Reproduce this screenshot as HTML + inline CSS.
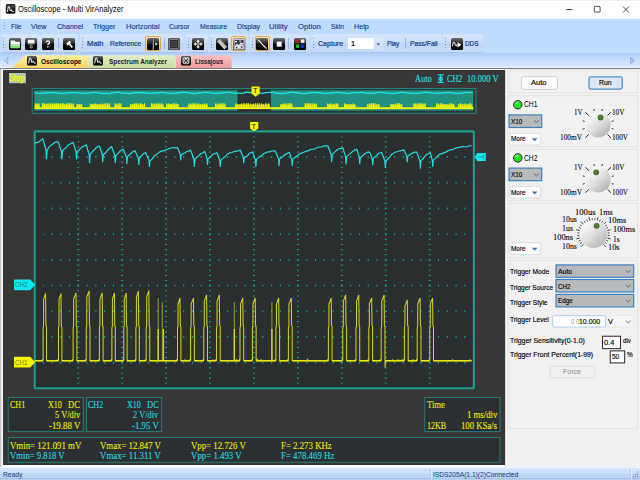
<!DOCTYPE html><html><head><meta charset="utf-8"><title>Oscilloscope - Multi VirAnalyzer</title><style>*{box-sizing:border-box;margin:0;padding:0}
html,body{width:640px;height:480px;overflow:hidden;background:#fff;font-family:"Liberation Sans",sans-serif;}
.a{position:absolute}
.t{position:absolute;white-space:nowrap;line-height:1.16}
#title{left:0;top:0;width:640px;height:19px;background:#fff;border-top:0.8px solid #efefef;border-left:0.8px solid #efefef}
#menubar{left:0;top:18.8px;width:640px;height:15.2px;background:#bfdbff}
#toolbar{left:0;top:34px;width:640px;height:19px;background:#bfdbff}
#tabs{left:0;top:53px;width:640px;height:14.8px;background:linear-gradient(#b0cdfa,#c3dbfc 40%,#dce9fb 92%,#f2f6fc)}
.band{position:absolute;top:34.3px;height:18.4px;border-radius:0 2.5px 2.5px 0;background:linear-gradient(#d6e5fb 0%,#cddff8 45%,#c1d6f4 55%,#c6dbf8 100%);border-bottom:1px solid #a9c4ea}
.grip{position:absolute;top:38px;width:1.2px;height:11px;background:repeating-linear-gradient(#6f98dc 0 1.3px,transparent 1.3px 2.9px)}
.ico{position:absolute;top:37.5px;width:12.2px;height:12.2px;border-radius:1.8px;background:linear-gradient(#6a6a6a,#222 45%,#000);overflow:hidden}
.hl{position:absolute;top:35.6px;width:15.4px;height:15.4px;border-radius:2px;border:1px solid #e0a850;background:linear-gradient(#fde6b0,#fbc670)}
.sep{position:absolute;top:38px;width:1px;height:11px;background:#9ab5de}
#scope{left:2.8px;top:70.3px;width:502.5px;height:394.4px;background:#373737}
#panel{left:507px;top:69px;width:133px;height:398px;background:#f0f0f0}
#status{left:0;top:467.2px;width:640px;height:12.8px;background:linear-gradient(#f4f8fd 0,#d9e7fa 8%,#cbdef7 45%,#bcd3f2 55%,#c0d6f3 85%,#9fbde6 88%,#c5d9f5 100%)}
svg{position:absolute;left:0;top:0;overflow:visible}
</style></head><body><div class="a" id="title"></div>
<svg width="20" height="19" viewBox="0 0 20 19"><rect x="5.8" y="4" width="9.6" height="9.8" rx="1.5" fill="#111"/><rect x="6.3" y="4.4" width="8.6" height="4" rx="1" fill="#555" opacity=".6"/><path d="M7.3 12 L8.3 6.8 L9.3 6.8 L10.3 11 L11.2 9.6 L11.9 11.3 L13.8 11.3" fill="none" stroke="#fff" stroke-width="0.9"/></svg>
<div class="t" style="left:18.40px;top:5.44px;font-size:8.2px;color:#000;font-family:'Liberation Sans',sans-serif;transform:scaleX(0.917);transform-origin:0 0;">Oscilloscope - Multi VirAnalyzer</div>
<svg width="640" height="19" viewBox="0 0 640 19"><path d="M566 9.5h6.5" stroke="#222" stroke-width="0.8"/><rect x="594.3" y="6.3" width="5.8" height="5.8" rx="0.8" fill="none" stroke="#222" stroke-width="0.8"/><path d="M623 6.5l6 6M629 6.5l-6 6" stroke="#222" stroke-width="0.8"/></svg>
<div class="a" id="menubar"></div><div class="a" id="toolbar"></div><div class="a" id="tabs"></div>
<div class="grip" style="left:3.5px;top:22px;height:8px"></div>
<div class="t" style="left:11.10px;top:23.35px;font-size:7.5px;color:#123a82;font-family:'Liberation Sans',sans-serif;transform:scaleX(0.868);transform-origin:0 0;-webkit-text-stroke:0.12px #123a82;">File</div>
<div class="t" style="left:31.40px;top:23.35px;font-size:7.5px;color:#123a82;font-family:'Liberation Sans',sans-serif;transform:scaleX(0.961);transform-origin:0 0;-webkit-text-stroke:0.12px #123a82;">View</div>
<div class="t" style="left:56.70px;top:23.35px;font-size:7.5px;color:#123a82;font-family:'Liberation Sans',sans-serif;transform:scaleX(0.937);transform-origin:0 0;-webkit-text-stroke:0.12px #123a82;">Channel</div>
<div class="t" style="left:92.70px;top:23.35px;font-size:7.5px;color:#123a82;font-family:'Liberation Sans',sans-serif;transform:scaleX(0.958);transform-origin:0 0;-webkit-text-stroke:0.12px #123a82;">Trigger</div>
<div class="t" style="left:125.80px;top:23.35px;font-size:7.5px;color:#123a82;font-family:'Liberation Sans',sans-serif;transform:scaleX(0.998);transform-origin:0 0;-webkit-text-stroke:0.12px #123a82;">Horizontal</div>
<div class="t" style="left:169.10px;top:23.35px;font-size:7.5px;color:#123a82;font-family:'Liberation Sans',sans-serif;transform:scaleX(0.915);transform-origin:0 0;-webkit-text-stroke:0.12px #123a82;">Cursor</div>
<div class="t" style="left:200.10px;top:23.35px;font-size:7.5px;color:#123a82;font-family:'Liberation Sans',sans-serif;transform:scaleX(0.925);transform-origin:0 0;-webkit-text-stroke:0.12px #123a82;">Measure</div>
<div class="t" style="left:236.70px;top:23.35px;font-size:7.5px;color:#123a82;font-family:'Liberation Sans',sans-serif;transform:scaleX(0.939);transform-origin:0 0;-webkit-text-stroke:0.12px #123a82;">Display</div>
<div class="t" style="left:269.20px;top:23.35px;font-size:7.5px;color:#123a82;font-family:'Liberation Sans',sans-serif;transform:scaleX(1.019);transform-origin:0 0;-webkit-text-stroke:0.12px #123a82;">Utility</div>
<div class="t" style="left:297.70px;top:23.35px;font-size:7.5px;color:#123a82;font-family:'Liberation Sans',sans-serif;transform:scaleX(1.027);transform-origin:0 0;-webkit-text-stroke:0.12px #123a82;">Option</div>
<div class="t" style="left:330.50px;top:23.35px;font-size:7.5px;color:#123a82;font-family:'Liberation Sans',sans-serif;transform:scaleX(0.891);transform-origin:0 0;-webkit-text-stroke:0.12px #123a82;">Skin</div>
<div class="t" style="left:353.50px;top:23.35px;font-size:7.5px;color:#123a82;font-family:'Liberation Sans',sans-serif;transform:scaleX(0.959);transform-origin:0 0;-webkit-text-stroke:0.12px #123a82;">Help</div>
<div class="band" style="left:1.5px;width:76.3px"></div>
<div class="grip" style="left:3.3px"></div>
<div class="band" style="left:79.7px;width:104.3px"></div>
<div class="grip" style="left:81.5px"></div>
<div class="band" style="left:186px;width:21.5px"></div>
<div class="grip" style="left:187.8px"></div>
<div class="band" style="left:209.5px;width:38.5px"></div>
<div class="grip" style="left:211.3px"></div>
<div class="band" style="left:250px;width:59px"></div>
<div class="grip" style="left:251.8px"></div>
<div class="band" style="left:311px;width:130.5px"></div>
<div class="grip" style="left:312.8px"></div>
<div class="band" style="left:443px;width:40.39999999999998px"></div>
<div class="grip" style="left:444.8px"></div>
<div class="sep" style="left:57.7px"></div>
<div class="sep" style="left:164px"></div>
<div class="sep" style="left:288.4px"></div>
<div class="sep" style="left:404.6px"></div>
<div class="hl" style="left:145.2px"></div>
<div class="hl" style="left:230.6px"></div>
<div class="hl" style="left:254.6px"></div>
<svg style="left:8.9px;top:37.5px" width="12.2" height="12.2" viewBox="0 0 12.2 12.2"><defs><linearGradient id="ib0" x1="0" y1="0" x2="0" y2="1"><stop offset="0" stop-color="#6e6e6e"/><stop offset=".45" stop-color="#262626"/><stop offset=".5" stop-color="#0a0a0a"/><stop offset="1" stop-color="#000"/></linearGradient><clipPath id="ic0"><rect width="12.2" height="12.2" rx="1.8"/></clipPath></defs><g clip-path="url(#ic0)"><rect width="12.2" height="12.2" fill="url(#ib0)"/><path d="M1.6 2.4h4l.9 1.3h4.3v3H1.6z" fill="#fff"/><path d="M1.4 6.6h9.6v3.6H1.4z" fill="#7fe66e"/><path d="M1.4 6.6h9.6v1H1.4z" fill="#c9f7c0"/></g></svg>
<svg style="left:25.4px;top:37.5px" width="12.2" height="12.2" viewBox="0 0 12.2 12.2"><defs><linearGradient id="ib1" x1="0" y1="0" x2="0" y2="1"><stop offset="0" stop-color="#6e6e6e"/><stop offset=".45" stop-color="#262626"/><stop offset=".5" stop-color="#0a0a0a"/><stop offset="1" stop-color="#000"/></linearGradient><clipPath id="ic1"><rect width="12.2" height="12.2" rx="1.8"/></clipPath></defs><g clip-path="url(#ic1)"><rect width="12.2" height="12.2" fill="url(#ib1)"/><path d="M2.8 1.8h6.8v3.8H2.8z" fill="#f4f4f4"/><path d="M2.8 6.4h6.8" stroke="#aaa" stroke-width=".6"/><circle cx="6.2" cy="8.8" r="1.2" fill="none" stroke="#ddd" stroke-width=".8"/></g></svg>
<svg style="left:41.7px;top:37.5px" width="12.2" height="12.2" viewBox="0 0 12.2 12.2"><defs><linearGradient id="ib2" x1="0" y1="0" x2="0" y2="1"><stop offset="0" stop-color="#6e6e6e"/><stop offset=".45" stop-color="#262626"/><stop offset=".5" stop-color="#0a0a0a"/><stop offset="1" stop-color="#000"/></linearGradient><clipPath id="ic2"><rect width="12.2" height="12.2" rx="1.8"/></clipPath></defs><g clip-path="url(#ic2)"><rect width="12.2" height="12.2" fill="url(#ib2)"/><path d="M4.3 4.6q0-1.7 1.6-1.7t1.6 1.5q0 .9-.9 1.4t-.8 1.4" fill="none" stroke="#fff" stroke-width="1.3"/><rect x="5.1" y="8.2" width="1.4" height="1.3" fill="#fff"/></g></svg>
<svg style="left:62.9px;top:37.5px" width="12.2" height="12.2" viewBox="0 0 12.2 12.2"><defs><linearGradient id="ib3" x1="0" y1="0" x2="0" y2="1"><stop offset="0" stop-color="#6e6e6e"/><stop offset=".45" stop-color="#262626"/><stop offset=".5" stop-color="#0a0a0a"/><stop offset="1" stop-color="#000"/></linearGradient><clipPath id="ic3"><rect width="12.2" height="12.2" rx="1.8"/></clipPath></defs><g clip-path="url(#ic3)"><rect width="12.2" height="12.2" fill="url(#ib3)"/><path d="M3.2 5.6l3.4-2.8 1.6 1.8-1.2 1 3 3.2-1.2 1.1-3-3.3-1.2 1z" fill="#fff"/></g></svg>
<svg style="left:146.8px;top:37.5px" width="12.2" height="12.2" viewBox="0 0 12.2 12.2"><defs><linearGradient id="ib4" x1="0" y1="0" x2="0" y2="1"><stop offset="0" stop-color="#6e6e6e"/><stop offset=".45" stop-color="#262626"/><stop offset=".5" stop-color="#0a0a0a"/><stop offset="1" stop-color="#000"/></linearGradient><clipPath id="ic4"><rect width="12.2" height="12.2" rx="1.8"/></clipPath></defs><g clip-path="url(#ic4)"><rect width="12.2" height="12.2" fill="url(#ib4)"/><rect x="5.4" y=".4" width="1.6" height="11.4" fill="#9a9a9a"/><rect x="4.9" y=".4" width=".5" height="11.4" fill="#000"/><rect x="7" y=".4" width=".5" height="11.4" fill="#000"/><path d="M8.4 4.4l2.3 1.7-2.3 1.7z" fill="#fff"/></g></svg>
<svg style="left:168.2px;top:37.5px" width="12.2" height="12.2" viewBox="0 0 12.2 12.2"><defs><linearGradient id="ib5" x1="0" y1="0" x2="0" y2="1"><stop offset="0" stop-color="#6e6e6e"/><stop offset=".45" stop-color="#262626"/><stop offset=".5" stop-color="#0a0a0a"/><stop offset="1" stop-color="#000"/></linearGradient><clipPath id="ic5"><rect width="12.2" height="12.2" rx="1.8"/></clipPath></defs><g clip-path="url(#ic5)"><rect width="12.2" height="12.2" fill="url(#ib5)"/><rect x="0" y="0" width="12.2" height="12.2" rx="2" fill="#555"/><rect x="1.4" y="1.4" width="9.4" height="9.4" rx="1.4" fill="#2a2a2a" stroke="#999" stroke-width=".9"/><rect x="3.4" y="3.4" width="5.4" height="5.4" fill="#3c3c3c" stroke="#555" stroke-width=".5"/></g></svg>
<svg style="left:192.1px;top:37.5px" width="12.2" height="12.2" viewBox="0 0 12.2 12.2"><defs><linearGradient id="ib6" x1="0" y1="0" x2="0" y2="1"><stop offset="0" stop-color="#6e6e6e"/><stop offset=".45" stop-color="#262626"/><stop offset=".5" stop-color="#0a0a0a"/><stop offset="1" stop-color="#000"/></linearGradient><clipPath id="ic6"><rect width="12.2" height="12.2" rx="1.8"/></clipPath></defs><g clip-path="url(#ic6)"><rect width="12.2" height="12.2" fill="url(#ib6)"/><path d="M6.1 1.4l1.9 2.3H6.8v1.7h-1.4V3.7H4.2zM6.1 10.8l1.9-2.3H6.8V6.8h-1.4v1.7H4.2zM1.4 6.1l2.3-1.9v1.2h1.7v1.4H3.7v1.2zM10.8 6.1L8.5 4.2v1.2H6.8v1.4h1.7v1.2z" fill="#f0f0f0"/></g></svg>
<svg style="left:216px;top:37.5px" width="12.2" height="12.2" viewBox="0 0 12.2 12.2"><defs><linearGradient id="ib7" x1="0" y1="0" x2="0" y2="1"><stop offset="0" stop-color="#6e6e6e"/><stop offset=".45" stop-color="#262626"/><stop offset=".5" stop-color="#0a0a0a"/><stop offset="1" stop-color="#000"/></linearGradient><clipPath id="ic7"><rect width="12.2" height="12.2" rx="1.8"/></clipPath></defs><g clip-path="url(#ic7)"><rect width="12.2" height="12.2" fill="url(#ib7)"/><path d="M1.2 3.6L4 1l7.2 7.8-2.8 2.6z" fill="#cfcfcf"/><path d="M3.4 3.4l1.2-1.1M4.8 4.9l1.2-1.1M6.2 6.4l1.2-1.1M7.6 7.9l1.2-1.1M9 9.4l1.2-1.1" stroke="#333" stroke-width=".6"/></g></svg>
<svg style="left:232.6px;top:37.5px" width="12.2" height="12.2" viewBox="0 0 12.2 12.2"><defs><linearGradient id="ib8" x1="0" y1="0" x2="0" y2="1"><stop offset="0" stop-color="#6e6e6e"/><stop offset=".45" stop-color="#262626"/><stop offset=".5" stop-color="#0a0a0a"/><stop offset="1" stop-color="#000"/></linearGradient><clipPath id="ic8"><rect width="12.2" height="12.2" rx="1.8"/></clipPath></defs><g clip-path="url(#ic8)"><rect width="12.2" height="12.2" fill="url(#ib8)"/><rect x=".6" y=".6" width="11" height="11" fill="#e8e8e8"/><rect x="1.6" y="1.8" width="9" height="8.6" fill="#30404a"/><path d="M1.6 8l2.4-2.6 1.8 1.6 2-3 3 4.2v2.2H1.6z" fill="#cfd6da"/><path d="M2 3h2v1.2H2zM6.4 2.4h1.6v1H6.4zM8.8 5h1.4v1H8.8zM4.6 8.4h2v1.4h-2z" fill="#fff"/><path d="M3 9h1.2v1H3zM8 8.6h1.4v1.2H8z" fill="#10181c"/></g></svg>
<svg style="left:256.4px;top:37.5px" width="12.2" height="12.2" viewBox="0 0 12.2 12.2"><defs><linearGradient id="ib9" x1="0" y1="0" x2="0" y2="1"><stop offset="0" stop-color="#6e6e6e"/><stop offset=".45" stop-color="#262626"/><stop offset=".5" stop-color="#0a0a0a"/><stop offset="1" stop-color="#000"/></linearGradient><clipPath id="ic9"><rect width="12.2" height="12.2" rx="1.8"/></clipPath></defs><g clip-path="url(#ic9)"><rect width="12.2" height="12.2" fill="url(#ib9)"/><path d="M2 1.6l8.4 9" stroke="#fff" stroke-width="1.1"/></g></svg>
<svg style="left:272.5px;top:37.5px" width="12.2" height="12.2" viewBox="0 0 12.2 12.2"><defs><linearGradient id="ib10" x1="0" y1="0" x2="0" y2="1"><stop offset="0" stop-color="#6e6e6e"/><stop offset=".45" stop-color="#262626"/><stop offset=".5" stop-color="#0a0a0a"/><stop offset="1" stop-color="#000"/></linearGradient><clipPath id="ic10"><rect width="12.2" height="12.2" rx="1.8"/></clipPath></defs><g clip-path="url(#ic10)"><rect width="12.2" height="12.2" fill="url(#ib10)"/><rect x="3.7" y="3.6" width="5" height="5" fill="#fff"/></g></svg>
<svg style="left:293.8px;top:37.5px" width="12.2" height="12.2" viewBox="0 0 12.2 12.2"><defs><linearGradient id="ib11" x1="0" y1="0" x2="0" y2="1"><stop offset="0" stop-color="#6e6e6e"/><stop offset=".45" stop-color="#262626"/><stop offset=".5" stop-color="#0a0a0a"/><stop offset="1" stop-color="#000"/></linearGradient><clipPath id="ic11"><rect width="12.2" height="12.2" rx="1.8"/></clipPath></defs><g clip-path="url(#ic11)"><rect width="12.2" height="12.2" fill="url(#ib11)"/><rect x="1.8" y="1.5" width="3.4" height="3.3" fill="#c01818"/><rect x="6.9" y="1.5" width="3.5" height="3.3" fill="#f8f8f8"/><rect x="1.8" y="6.4" width="3.4" height="3.5" fill="#18c018"/><rect x="6.9" y="6.4" width="3.5" height="3.5" fill="#1030e8"/></g></svg>
<svg style="left:450.6px;top:37.5px" width="12.2" height="12.2" viewBox="0 0 12.2 12.2"><defs><linearGradient id="ib12" x1="0" y1="0" x2="0" y2="1"><stop offset="0" stop-color="#6e6e6e"/><stop offset=".45" stop-color="#262626"/><stop offset=".5" stop-color="#0a0a0a"/><stop offset="1" stop-color="#000"/></linearGradient><clipPath id="ic12"><rect width="12.2" height="12.2" rx="1.8"/></clipPath></defs><g clip-path="url(#ic12)"><rect width="12.2" height="12.2" fill="url(#ib12)"/><path d="M1.4 8.4q1-6.5 2.2-3.4t1.6 3.2q.6-2.6 1.2-1.2" fill="none" stroke="#fff" stroke-width="1"/><path d="M6.6 4.2l3.8 2.6-3.8 2.6z" fill="#fff"/></g></svg>
<div class="t" style="left:86.70px;top:39.85px;font-size:7.5px;color:#123a82;font-family:'Liberation Sans',sans-serif;transform:scaleX(0.989);transform-origin:0 0;-webkit-text-stroke:0.2px #123a82;">Math</div>
<div class="t" style="left:109.50px;top:39.85px;font-size:7.5px;color:#123a82;font-family:'Liberation Sans',sans-serif;transform:scaleX(0.904);transform-origin:0 0;-webkit-text-stroke:0.2px #123a82;">Reference</div>
<div class="t" style="left:317.50px;top:39.85px;font-size:7.5px;color:#123a82;font-family:'Liberation Sans',sans-serif;transform:scaleX(0.941);transform-origin:0 0;-webkit-text-stroke:0.2px #123a82;">Capture</div>
<div class="a" style="left:348.2px;top:37.6px;width:25.8px;height:11.3px;background:#fff"></div>
<div class="a" style="left:374px;top:37.6px;width:7.8px;height:11.3px;background:linear-gradient(#dbe8fb,#cbdef8);box-shadow:0 0 0 0.6px #e4eefb"></div>
<svg width="640" height="60" viewBox="0 0 640 60"><path d="M376.6 43.4h3.4l-1.7 2.1z" fill="#35539a"/></svg>
<div class="t" style="left:351.10px;top:40.05px;font-size:7.5px;color:#000;font-family:'Liberation Sans',sans-serif;transform:scaleX(1.000);transform-origin:0 0;-webkit-text-stroke:0.2px #000;">1</div>
<div class="t" style="left:386.70px;top:39.85px;font-size:7.5px;color:#123a82;font-family:'Liberation Sans',sans-serif;transform:scaleX(0.836);transform-origin:0 0;-webkit-text-stroke:0.2px #123a82;">Play</div>
<div class="t" style="left:410.10px;top:39.85px;font-size:7.5px;color:#123a82;font-family:'Liberation Sans',sans-serif;transform:scaleX(0.895);transform-origin:0 0;-webkit-text-stroke:0.2px #123a82;">Pass/Fail</div>
<div class="t" style="left:464.50px;top:39.85px;font-size:7.5px;color:#123a82;font-family:'Liberation Sans',sans-serif;transform:scaleX(0.846);transform-origin:0 0;-webkit-text-stroke:0.2px #123a82;">DDS</div>
<svg width="640" height="70" viewBox="0 0 640 70"><defs><linearGradient id="gy" x1="0" y1="0" x2="0" y2="1"><stop offset="0" stop-color="#fff0a8"/><stop offset="1" stop-color="#ffd560"/></linearGradient><linearGradient id="gg" x1="0" y1="0" x2="0" y2="1"><stop offset="0" stop-color="#e4efc8"/><stop offset="1" stop-color="#c9dca0"/></linearGradient><linearGradient id="gp" x1="0" y1="0" x2="0" y2="1"><stop offset="0" stop-color="#f8c4c4"/><stop offset="1" stop-color="#f09a9a"/></linearGradient></defs><path d="M176 55.3h55.6v12.6H176z" fill="url(#gp)"/><path d="M89 55.3h86.4v12.6H89z" fill="url(#gg)"/><path d="M12.3 67.9 L24.3 55.9 Q24.9 55.3 25.9 55.3 H88.5 V67.9z" fill="url(#gy)"/><path d="M4.2 60.6l3.6-2.8v5.6z" fill="none" stroke="#7e9fd6" stroke-width="0.7"/><path d="M630.8 57.8l3.4 2.8-3.4 2.8z" fill="none" stroke="#5a7fc8" stroke-width="0.7"/></svg>
<svg style="left:26.9px;top:56.1px" width="10" height="9.4" viewBox="0 0 10 9.4"><defs><linearGradient id="tb0" x1="0" y1="0" x2="0" y2="1"><stop offset="0" stop-color="#666"/><stop offset=".45" stop-color="#222"/><stop offset="1" stop-color="#000"/></linearGradient></defs><rect width="10" height="9.4" rx="1.5" fill="url(#tb0)"/><path d="M1.6 7.4L2.7 2.2q.5-1 1 0L4.9 6.6l.9-1.3q.4-.4.8.2l.5 1.6h1.6" fill="none" stroke="#fff" stroke-width=".95"/></svg>
<svg style="left:93.3px;top:56.1px" width="10" height="9.4" viewBox="0 0 10 9.4"><defs><linearGradient id="tb1" x1="0" y1="0" x2="0" y2="1"><stop offset="0" stop-color="#666"/><stop offset=".45" stop-color="#222"/><stop offset="1" stop-color="#000"/></linearGradient></defs><rect width="10" height="9.4" rx="1.5" fill="url(#tb1)"/><path d="M1.6 7.4L2.7 2.2q.5-1 1 0L4.9 6.6l.9-1.3q.4-.4.8.2l.5 1.6h1.6" fill="none" stroke="#fff" stroke-width=".95"/></svg>
<svg style="left:181px;top:56.1px" width="10" height="9.4" viewBox="0 0 10 9.4"><defs><linearGradient id="tb2" x1="0" y1="0" x2="0" y2="1"><stop offset="0" stop-color="#666"/><stop offset=".45" stop-color="#222"/><stop offset="1" stop-color="#000"/></linearGradient></defs><rect width="10" height="9.4" rx="1.5" fill="url(#tb2)"/><ellipse cx="5" cy="4.7" rx="3.4" ry="1.5" fill="none" stroke="#fff" stroke-width=".7" transform="rotate(45 5 4.7)"/><ellipse cx="5" cy="4.7" rx="3.4" ry="1.5" fill="none" stroke="#fff" stroke-width=".7" transform="rotate(-45 5 4.7)"/><rect x="1.9" y="1.6" width="6.2" height="6.2" rx="1.6" fill="none" stroke="#eee" stroke-width=".6"/></svg>
<div class="t" style="left:41.10px;top:58.15px;font-size:7.5px;color:#000;font-family:'Liberation Sans',sans-serif;font-weight:bold;transform:scaleX(0.867);transform-origin:0 0;">Oscilloscope</div>
<div class="t" style="left:108.80px;top:58.15px;font-size:7.5px;color:#222;font-family:'Liberation Sans',sans-serif;font-weight:bold;transform:scaleX(0.856);transform-origin:0 0;">Spectrum Analyzer</div>
<div class="t" style="left:195.40px;top:58.15px;font-size:7.5px;color:#222;font-family:'Liberation Sans',sans-serif;font-weight:bold;transform:scaleX(0.812);transform-origin:0 0;">Lissajous</div>
<div class="a" style="left:0;top:67.9px;width:640px;height:1.1px;background:#7c7e82"></div>
<div class="a" style="left:0;top:69px;width:507.2px;height:398px;background:#fbfbfb"></div>
<div class="a" style="left:0;top:69px;width:1.9px;height:398px;background:linear-gradient(90deg,#c4c4c4 0 40%,#e4ecf7 40%)"></div>
<div class="a" style="left:505.2px;top:69px;width:0.8px;height:398px;background:#d9d9d9"></div>
<div class="a" id="scope"></div>
<div class="a" id="panel"></div>
<div class="a" id="status"></div>
<div class="t" style="left:2.60px;top:471.05px;font-size:7.5px;color:#123a82;font-family:'Liberation Sans',sans-serif;transform:scaleX(0.895);transform-origin:0 0;">Ready</div>
<div class="t" style="left:433.30px;top:471.05px;font-size:7.5px;color:#123a82;font-family:'Liberation Sans',sans-serif;transform:scaleX(0.889);transform-origin:0 0;">ISDS205A(1.1)(2)Connected</div>
<svg width="640" height="480" viewBox="0 0 640 480"><rect x="9.1" y="73" width="16.8" height="10.2" fill="#b3c5af"/><rect x="32.2" y="88.5" width="443.8" height="24.8" fill="#2f3435" stroke="#1c8a7b" stroke-width="1"/><rect x="34.4" y="90.3" width="203.3" height="20.4" fill="#229080"/><rect x="271" y="90.3" width="202.3" height="20.4" fill="#229080"/><rect x="237.7" y="90.3" width="33.3" height="20.4" fill="#2d3233"/><polyline points="34.6,92.72 35.9,93.11 37.2,93.15 38.5,93.42 39.8,93.49 41.1,93.08 42.4,92.96 43.7,93.39 45.0,92.82 46.3,92.61 47.6,92.98 48.9,92.47 50.2,92.65 51.5,92.39 52.8,92.56 54.1,92.33 55.4,92.83 56.7,93.17 58.0,93.11 59.3,93.42 60.6,93.47 61.9,93.09 63.2,93.56 64.5,93.35 65.8,93.01 67.1,92.64 68.4,93.04 69.7,92.60 71.0,92.64 72.3,92.68 73.6,92.55 74.9,92.76 76.2,92.51 77.5,92.96 78.8,92.89 80.1,93.41 81.4,93.52 82.7,93.08 84.0,93.14 85.3,93.17 86.6,93.60 87.9,93.09 89.2,93.05 90.5,92.63 91.8,92.61 93.1,92.40 94.4,92.31 95.7,92.47 97.0,92.53 98.3,92.88 99.6,92.89 100.9,93.24 102.2,93.37 103.5,93.61 104.8,93.49 106.1,93.16 107.4,93.62 108.7,93.59 110.0,93.40 111.3,92.99 112.6,92.91 113.9,92.39 115.2,92.70 116.5,92.46 117.8,92.26 119.1,92.17 120.4,92.85 121.7,93.12 123.0,92.67 124.3,93.34 125.6,93.22 126.9,93.13 128.2,93.26 129.5,93.55 130.8,93.52 132.1,92.79 133.4,93.01 134.7,92.43 136.0,92.74 137.3,92.35 138.6,92.67 139.9,92.75 141.2,92.49 142.5,92.97 143.8,92.65 145.1,92.68 146.4,93.22 147.7,92.96 149.0,93.16 150.3,93.33 151.6,93.43 152.9,93.01 154.2,92.77 155.5,93.17 156.8,92.60 158.1,92.89 159.4,92.74 160.7,92.32 162.0,92.39 163.3,92.51 164.6,92.73 165.9,92.87 167.2,93.03 168.5,93.24 169.8,93.60 171.1,93.38 172.4,93.35 173.7,93.50 175.0,93.05 176.3,92.94 177.6,93.23 178.9,92.73 180.2,92.60 181.5,92.11 182.8,92.34 184.1,92.48 185.4,92.17 186.7,92.72 188.0,92.91 189.3,92.69 190.6,93.26 191.9,93.28 193.2,93.51 194.5,93.29 195.8,93.49 197.1,93.39 198.4,92.73 199.7,92.58 201.0,92.83 202.3,92.88 203.6,92.27 204.9,92.37 206.2,92.49 207.5,92.39 208.8,92.56 210.1,92.70 211.4,92.92 212.7,93.25 214.0,93.17 215.3,93.30 216.6,93.59 217.9,93.00 219.2,93.26 220.5,93.22 221.8,92.74 223.1,92.50 224.4,92.75 225.7,92.26 227.0,92.18 228.3,92.38 229.6,92.66 230.9,92.39 232.2,92.72 233.5,92.91 234.8,93.43 236.1,93.28 237.4,93.64 238.7,93.16 240.0,93.21 241.3,93.31 242.6,93.31 243.9,92.82 245.2,92.49 246.5,92.27 247.8,92.45 249.1,92.18 250.4,92.65 251.7,92.77 253.0,92.46 254.3,92.70 255.6,93.26 256.9,93.30 258.2,93.54 259.5,93.28 260.8,93.13 262.1,93.17 263.4,93.40 264.7,92.87 266.0,92.74 267.3,92.61 268.6,92.47 269.9,92.37 271.2,92.69 272.5,92.20 273.8,92.19 275.1,93.00 276.4,93.14 277.7,93.40 279.0,93.17 280.3,93.65 281.6,93.69 282.9,93.19 284.2,93.48 285.5,93.42 286.8,93.13 288.1,92.84 289.4,92.51 290.7,92.40 292.0,92.23 293.3,92.10 294.6,92.51 295.9,92.40 297.2,92.92 298.5,92.57 299.8,93.35 301.1,93.36 302.4,93.64 303.7,93.67 305.0,93.66 306.3,93.36 307.6,92.83 308.9,93.17 310.2,92.59 311.5,92.50 312.8,92.62 314.1,92.44 315.4,92.34 316.7,92.76 318.0,92.64 319.3,92.61 320.6,92.73 321.9,93.33 323.2,93.22 324.5,93.55 325.8,93.29 327.1,93.17 328.4,93.32 329.7,93.38 331.0,92.76 332.3,93.00 333.6,92.92 334.9,92.71 336.2,92.64 337.5,92.06 338.8,92.55 340.1,92.83 341.4,92.42 342.7,92.75 344.0,92.93 345.3,93.27 346.6,93.30 347.9,93.38 349.2,93.57 350.5,92.94 351.8,92.83 353.1,92.71 354.4,92.52 355.7,92.32 357.0,92.82 358.3,92.66 359.6,92.12 360.9,92.47 362.2,92.45 363.5,92.62 364.8,92.82 366.1,93.21 367.4,93.32 368.7,93.26 370.0,93.18 371.3,93.25 372.6,93.01 373.9,93.17 375.2,93.11 376.5,92.69 377.8,92.31 379.1,92.25 380.4,92.32 381.7,92.48 383.0,92.67 384.3,92.51 385.6,92.97 386.9,93.03 388.2,93.07 389.5,93.18 390.8,93.36 392.1,93.54 393.4,93.31 394.7,93.40 396.0,93.09 397.3,92.76 398.6,92.78 399.9,92.73 401.2,92.17 402.5,92.35 403.8,92.36 405.1,92.75 406.4,92.91 407.7,92.68 409.0,93.24 410.3,93.34 411.6,93.11 412.9,93.35 414.2,93.14 415.5,93.58 416.8,93.37 418.1,93.38 419.4,93.13 420.7,92.86 422.0,92.75 423.3,92.51 424.6,92.13 425.9,92.47 427.2,92.14 428.5,92.37 429.8,92.98 431.1,92.65 432.4,92.86 433.7,93.01 435.0,93.64 436.3,93.17 437.6,93.02 438.9,93.49 440.2,92.83 441.5,93.16 442.8,92.85 444.1,92.81 445.4,92.77 446.7,92.46 448.0,92.63 449.3,92.17 450.6,92.82 451.9,92.81 453.2,93.14 454.5,92.88 455.8,93.47 457.1,93.68 458.4,93.09 459.7,93.23 461.0,93.28 462.3,93.31 463.6,92.72 464.9,92.49 466.2,92.39 467.5,92.53 468.8,92.58 470.1,92.35 471.4,92.41 472.7,92.57" fill="none" stroke="#20e0e4" stroke-width="1.3"/><rect x="34.4" y="107.2" width="439" height="1.9" fill="#f6f600"/><path d="M34.8 107.6v-3.2h4.9v3.2zM41.9 107.6v-3.2h31.9v3.2zM76.5 107.6v-3.2h5.7v3.2zM89.7 107.6v-3.2h20.6v3.2zM114.6 107.6v-3.2h7.0v3.2zM130.0 107.6v-3.2h15.3v3.2zM151.0 107.6v-3.2h13.0v3.2zM166.0 107.6v-3.2h13.0v3.2zM188.4 107.6v-3.2h19.6v3.2zM215.0 107.6v-3.2h11.0v3.2zM235.3 107.6v-3.2h34.7v3.2zM280.3 107.6v-3.2h12.2v3.2zM304.7 107.6v-3.2h12.2v3.2zM327.2 107.6v-3.2h11.2v3.2zM344.0 107.6v-3.2h11.6v3.2zM367.2 107.6v-3.2h12.4v3.2zM390.3 107.6v-3.2h12.2v3.2zM413.4 107.6v-3.2h12.6v3.2zM436.2 107.6v-3.2h18.8v3.2zM458.0 107.6v-3.2h14.5v3.2z" fill="#ecf010" opacity="0.72"/><path d="M34.8 107.8v-4.6h1.1v4.6zM36.4 107.8v-4.2h1.1v4.2zM38.1 107.8v-4.2h1.4v4.2zM41.9 107.8v-4.6h1.4v4.6zM43.8 107.8v-4.6h1.4v4.6zM45.7 107.8v-3.6h0.9v3.6zM47.3 107.8v-4.6h1.4v4.6zM49.7 107.8v-4.6h1.4v4.6zM52.1 107.8v-4.2h1.4v4.2zM54.0 107.8v-4.2h1.1v4.2zM55.6 107.8v-4.6h1.4v4.6zM57.5 107.8v-4.6h1.4v4.6zM59.9 107.8v-4.6h1.4v4.6zM62.3 107.8v-4.6h1.4v4.6zM64.2 107.8v-3.6h1.1v3.6zM66.0 107.8v-4.6h1.1v4.6zM67.6 107.8v-4.6h0.9v4.6zM69.0 107.8v-4.6h1.1v4.6zM70.6 107.8v-4.6h1.1v4.6zM72.7 107.8v-4.2h1.4v4.2zM76.5 107.8v-3.6h1.4v3.6zM78.6 107.8v-3.6h1.4v3.6zM80.7 107.8v-3.6h1.4v3.6zM89.7 107.8v-4.2h0.9v4.2zM91.6 107.8v-3.6h1.4v3.6zM93.5 107.8v-4.2h1.1v4.2zM95.1 107.8v-4.2h1.1v4.2zM96.7 107.8v-3.6h1.4v3.6zM98.8 107.8v-3.6h0.9v3.6zM100.4 107.8v-4.6h0.9v4.6zM101.8 107.8v-3.6h1.4v3.6zM103.7 107.8v-4.6h0.9v4.6zM105.3 107.8v-4.6h0.9v4.6zM106.9 107.8v-4.6h1.4v4.6zM108.8 107.8v-4.6h0.9v4.6zM114.6 107.8v-4.6h1.1v4.6zM116.4 107.8v-4.2h0.9v4.2zM118.3 107.8v-4.6h1.4v4.6zM120.4 107.8v-4.6h0.9v4.6zM130.0 107.8v-3.6h1.1v3.6zM132.1 107.8v-3.6h1.1v3.6zM133.9 107.8v-4.6h1.4v4.6zM135.8 107.8v-4.6h1.4v4.6zM138.2 107.8v-4.6h1.1v4.6zM140.0 107.8v-4.6h1.4v4.6zM141.9 107.8v-3.6h1.1v3.6zM144.0 107.8v-4.6h1.1v4.6zM151.0 107.8v-4.6h1.4v4.6zM153.4 107.8v-4.2h1.4v4.2zM155.8 107.8v-4.2h1.4v4.2zM157.7 107.8v-4.6h1.1v4.6zM159.3 107.8v-4.2h0.9v4.2zM160.9 107.8v-4.6h1.4v4.6zM166.0 107.8v-4.2h1.1v4.2zM167.8 107.8v-4.6h1.1v4.6zM169.4 107.8v-3.6h1.4v3.6zM171.3 107.8v-4.2h1.4v4.2zM173.7 107.8v-4.6h1.4v4.6zM175.8 107.8v-4.6h0.9v4.6zM177.4 107.8v-3.6h1.1v3.6zM188.4 107.8v-4.6h0.9v4.6zM190.3 107.8v-4.2h1.1v4.2zM192.4 107.8v-4.6h1.4v4.6zM194.5 107.8v-4.6h1.1v4.6zM196.6 107.8v-4.6h0.9v4.6zM198.2 107.8v-4.2h0.9v4.2zM199.8 107.8v-3.6h1.4v3.6zM202.2 107.8v-3.6h0.9v3.6zM203.6 107.8v-4.2h1.4v4.2zM206.0 107.8v-4.6h1.1v4.6zM215.0 107.8v-4.2h0.9v4.2zM216.6 107.8v-4.2h0.9v4.2zM218.5 107.8v-4.2h0.9v4.2zM220.1 107.8v-4.6h1.1v4.6zM221.7 107.8v-4.6h1.1v4.6zM223.5 107.8v-4.6h1.1v4.6zM235.3 107.8v-4.6h1.1v4.6zM237.4 107.8v-3.6h1.1v3.6zM239.5 107.8v-3.6h0.9v3.6zM240.9 107.8v-4.2h1.4v4.2zM243.0 107.8v-4.6h0.9v4.6zM244.4 107.8v-4.2h0.9v4.2zM245.8 107.8v-4.6h1.4v4.6zM247.7 107.8v-4.6h1.4v4.6zM250.1 107.8v-4.2h0.9v4.2zM251.7 107.8v-3.6h0.9v3.6zM253.1 107.8v-4.2h1.1v4.2zM255.2 107.8v-4.6h0.9v4.6zM257.1 107.8v-4.6h0.9v4.6zM258.7 107.8v-4.6h1.1v4.6zM260.8 107.8v-4.2h1.4v4.2zM262.7 107.8v-3.6h1.4v3.6zM265.1 107.8v-4.6h0.9v4.6zM266.5 107.8v-4.2h0.9v4.2zM268.1 107.8v-4.2h1.4v4.2zM280.3 107.8v-3.6h1.1v3.6zM281.9 107.8v-3.6h1.1v3.6zM283.5 107.8v-4.2h1.4v4.2zM285.6 107.8v-4.6h1.1v4.6zM287.7 107.8v-4.6h0.9v4.6zM289.1 107.8v-4.6h1.4v4.6zM291.2 107.8v-4.6h0.9v4.6zM304.7 107.8v-4.6h1.4v4.6zM306.8 107.8v-4.6h0.9v4.6zM308.2 107.8v-4.6h1.4v4.6zM310.3 107.8v-4.6h1.1v4.6zM312.4 107.8v-4.6h1.1v4.6zM314.0 107.8v-4.2h0.9v4.2zM315.6 107.8v-4.2h1.1v4.2zM327.2 107.8v-4.2h1.4v4.2zM329.1 107.8v-3.6h0.9v3.6zM330.5 107.8v-4.6h1.4v4.6zM332.9 107.8v-3.6h0.9v3.6zM334.3 107.8v-4.2h0.9v4.2zM335.9 107.8v-4.2h1.1v4.2zM337.5 107.8v-4.6h0.9v4.6zM344.0 107.8v-4.6h1.1v4.6zM345.6 107.8v-3.6h1.4v3.6zM347.5 107.8v-3.6h1.1v3.6zM349.3 107.8v-3.6h1.1v3.6zM350.9 107.8v-3.6h0.9v3.6zM352.5 107.8v-4.2h1.1v4.2zM354.1 107.8v-3.6h1.1v3.6zM367.2 107.8v-3.6h0.9v3.6zM369.1 107.8v-4.6h1.1v4.6zM370.9 107.8v-4.6h1.1v4.6zM372.6 107.8v-4.6h1.4v4.6zM374.4 107.8v-4.6h1.1v4.6zM376.2 107.8v-3.6h0.9v3.6zM378.1 107.8v-3.6h1.1v3.6zM390.3 107.8v-3.6h1.4v3.6zM392.2 107.8v-3.6h0.9v3.6zM393.6 107.8v-3.6h0.9v3.6zM395.2 107.8v-4.2h0.9v4.2zM397.1 107.8v-4.6h1.4v4.6zM399.0 107.8v-4.6h1.1v4.6zM400.8 107.8v-3.6h1.1v3.6zM413.4 107.8v-4.6h1.1v4.6zM415.0 107.8v-4.2h1.1v4.2zM416.8 107.8v-4.6h0.9v4.6zM418.7 107.8v-4.6h1.1v4.6zM420.3 107.8v-4.6h1.4v4.6zM422.7 107.8v-4.2h1.1v4.2zM424.5 107.8v-4.6h1.1v4.6zM436.2 107.8v-4.6h1.1v4.6zM438.1 107.8v-4.2h1.1v4.2zM440.2 107.8v-4.6h1.4v4.6zM442.3 107.8v-4.2h0.9v4.2zM443.7 107.8v-3.6h1.4v3.6zM445.8 107.8v-3.6h0.9v3.6zM447.4 107.8v-3.6h0.9v3.6zM449.3 107.8v-4.6h0.9v4.6zM450.9 107.8v-4.6h1.4v4.6zM453.0 107.8v-3.6h0.9v3.6zM458.0 107.8v-3.6h1.1v3.6zM459.8 107.8v-4.6h1.4v4.6zM461.7 107.8v-3.6h1.1v3.6zM463.8 107.8v-4.2h0.9v4.2zM465.7 107.8v-4.2h0.9v4.2zM467.6 107.8v-3.6h0.9v3.6zM469.0 107.8v-4.6h0.9v4.6zM470.4 107.8v-4.6h0.9v4.6z" fill="#f4f400"/><rect x="34.75" y="131.4" width="439.1" height="256.9" rx="0.6" fill="#2a2f30" stroke="#1b9c8a" stroke-width="2.1"/><g stroke="#1f9c89" opacity="1"><line x1="78.23" y1="136.54" x2="78.23" y2="387.40" stroke-width="2" stroke-dasharray="1.1 4.040" stroke-dashoffset="0.5"/><line x1="122.16" y1="136.54" x2="122.16" y2="387.40" stroke-width="2" stroke-dasharray="1.1 4.040" stroke-dashoffset="0.5"/><line x1="166.09" y1="136.54" x2="166.09" y2="387.40" stroke-width="2" stroke-dasharray="1.1 4.040" stroke-dashoffset="0.5"/><line x1="210.02" y1="136.54" x2="210.02" y2="387.40" stroke-width="2" stroke-dasharray="1.1 4.040" stroke-dashoffset="0.5"/><line x1="253.95" y1="136.54" x2="253.95" y2="387.40" stroke-width="2" stroke-dasharray="1.1 4.040" stroke-dashoffset="0.5"/><line x1="297.88" y1="136.54" x2="297.88" y2="387.40" stroke-width="2" stroke-dasharray="1.1 4.040" stroke-dashoffset="0.5"/><line x1="341.81" y1="136.54" x2="341.81" y2="387.40" stroke-width="2" stroke-dasharray="1.1 4.040" stroke-dashoffset="0.5"/><line x1="385.74" y1="136.54" x2="385.74" y2="387.40" stroke-width="2" stroke-dasharray="1.1 4.040" stroke-dashoffset="0.5"/><line x1="429.67" y1="136.54" x2="429.67" y2="387.40" stroke-width="2" stroke-dasharray="1.1 4.040" stroke-dashoffset="0.5"/><line x1="43.09" y1="157.10" x2="472.60" y2="157.10" stroke-width="2" stroke-dasharray="1.1 7.686" stroke-dashoffset="0.5"/><line x1="43.09" y1="182.80" x2="472.60" y2="182.80" stroke-width="2" stroke-dasharray="1.1 7.686" stroke-dashoffset="0.5"/><line x1="43.09" y1="208.50" x2="472.60" y2="208.50" stroke-width="2" stroke-dasharray="1.1 7.686" stroke-dashoffset="0.5"/><line x1="43.09" y1="234.20" x2="472.60" y2="234.20" stroke-width="2" stroke-dasharray="1.1 7.686" stroke-dashoffset="0.5"/><line x1="43.09" y1="259.90" x2="472.60" y2="259.90" stroke-width="2" stroke-dasharray="1.1 7.686" stroke-dashoffset="0.5"/><line x1="43.09" y1="285.60" x2="472.60" y2="285.60" stroke-width="2" stroke-dasharray="1.1 7.686" stroke-dashoffset="0.5"/><line x1="43.09" y1="311.30" x2="472.60" y2="311.30" stroke-width="2" stroke-dasharray="1.1 7.686" stroke-dashoffset="0.5"/><line x1="43.09" y1="337.00" x2="472.60" y2="337.00" stroke-width="2" stroke-dasharray="1.1 7.686" stroke-dashoffset="0.5"/><line x1="43.09" y1="362.70" x2="472.60" y2="362.70" stroke-width="2" stroke-dasharray="1.1 7.686" stroke-dashoffset="0.5"/></g><polyline points="34.70,143.20 36.60,142.61 38.50,142.20 40.62,140.49 42.75,138.68 46.05,150.16 46.50,159.00 47.05,150.52 48.75,147.47 50.62,145.39 52.50,144.23 54.37,142.74 56.23,141.81 58.10,141.83 61.45,151.30 61.90,159.00 62.45,151.20 64.70,148.39 66.60,147.23 68.50,144.71 70.80,143.76 73.10,142.41 76.05,151.78 76.50,159.00 77.05,151.95 79.10,149.83 80.80,148.18 82.50,146.60 84.38,145.79 86.25,144.76 89.15,154.69 89.60,162.70 90.15,154.22 92.80,151.29 94.40,149.81 96.00,147.96 97.70,146.47 99.40,146.03 102.30,154.73 102.75,161.75 103.30,154.74 105.90,152.47 108.50,149.22 111.60,146.54 114.85,155.68 115.30,162.70 115.85,155.65 118.10,153.33 120.50,150.57 123.20,149.16 126.45,157.18 126.90,163.60 127.45,156.59 130.30,153.95 132.60,151.89 135.00,150.49 138.30,158.34 138.75,164.50 139.30,158.88 140.60,156.70 143.00,154.04 145.60,152.56 148.95,160.24 149.40,166.40 149.95,160.85 152.20,158.95 154.80,155.60 157.80,153.37 159.90,151.84 162.00,150.90 164.12,150.85 166.25,149.48 168.17,149.06 170.08,148.21 172.00,148.00 173.83,147.53 175.67,148.07 177.50,147.46 180.25,154.36 180.70,159.90 181.25,154.95 183.50,153.56 185.25,152.79 187.00,151.28 188.80,151.12 190.60,150.13 193.95,159.23 194.40,166.40 194.95,159.35 197.20,156.94 198.85,155.74 200.50,153.78 202.60,152.94 204.70,151.39 207.05,158.74 207.50,164.50 208.05,158.88 210.30,157.19 213.30,153.93 215.10,153.75 216.90,152.69 219.80,160.24 220.25,166.40 220.80,160.10 223.40,157.85 225.35,156.68 227.30,154.18 229.60,152.96 231.90,152.56 233.95,151.57 236.00,151.21 238.15,151.00 240.30,150.18 243.25,157.33 243.70,162.70 244.25,157.75 246.90,156.27 249.50,153.34 252.50,151.95 255.45,160.06 255.90,166.40 256.45,159.35 259.40,156.89 261.45,155.67 263.50,153.97 265.25,152.97 267.00,152.16 268.75,151.86 270.39,151.63 272.02,150.99 273.66,150.79 275.30,151.08 278.55,159.08 279.00,165.50 279.55,159.12 281.90,157.14 283.55,156.02 285.20,154.34 287.30,153.61 289.40,152.31 291.75,159.74 292.20,165.50 292.75,159.12 295.90,156.76 297.80,155.19 299.70,153.77 302.05,152.93 304.40,152.03 306.27,151.11 308.13,150.92 310.00,149.65 311.87,149.24 313.73,149.19 315.60,148.46 317.57,147.54 319.53,147.00 321.50,147.01 323.60,145.93 325.70,145.73 327.80,145.82 331.15,154.54 331.60,161.40 332.15,154.65 334.40,152.43 336.20,150.58 338.00,149.19 339.60,148.57 341.20,148.60 342.80,147.68 345.55,156.60 346.00,163.60 346.55,156.59 349.00,154.59 350.75,153.09 352.50,151.64 354.70,149.94 356.90,149.38 359.25,157.44 359.70,163.60 360.25,157.97 362.50,155.76 365.20,153.45 368.40,151.89 370.30,152.99 372.30,159.63 372.75,164.60 373.30,158.22 375.90,156.13 378.50,153.52 381.60,152.27 384.85,160.80 385.30,167.40 385.85,161.03 388.10,158.72 389.80,157.08 391.50,154.54 393.55,153.24 395.60,152.08 397.70,151.47 399.80,150.79 401.90,150.34 404.00,149.89 406.80,156.40 407.25,161.75 407.80,156.12 410.25,154.47 413.30,152.62 415.05,152.00 416.80,152.18 419.95,161.13 420.40,168.30 420.95,160.57 423.40,158.20 426.50,154.41 428.40,153.76 430.30,152.44 432.30,160.24 432.75,166.40 433.30,160.10 435.90,157.85 437.80,155.89 439.70,154.16 442.05,153.61 444.40,152.68 446.43,151.91 448.47,150.50 450.50,149.72 452.25,149.60 454.00,149.00 455.75,148.29 457.50,147.64 459.25,147.45 461.00,146.79 462.75,146.53 464.50,146.73 466.27,146.94 468.05,146.25 469.83,145.90 471.60,145.70" fill="none" stroke="#24dcdf" stroke-width="1.2" stroke-linejoin="round"/><path d="M34.699999999999996 360.8 L41.90 360.8 L42.50 359.6 L43.10 360.8 L43.10 328 L43.60 326 L43.65 299.4 L45.60 293.4 L45.90 325 L46.50 327 L46.50 360.8 L57.30 360.8 L57.90 359.6 L58.50 360.8 L58.50 328 L59.00 326 L59.05 299.4 L61.00 293.4 L61.30 325 L61.90 327 L61.90 360.8 L71.90 360.8 L72.50 359.6 L73.10 360.8 L73.10 328 L73.60 326 L73.65 299 L76.00 293 L76.30 325 L76.90 327 L76.90 360.8 L85.05 360.8 L85.65 359.6 L86.25 360.8 L86.25 328 L86.75 326 L86.80 297 L89.10 291 L89.40 325 L90.00 327 L90.00 360.8 L98.20 360.8 L98.80 359.6 L99.40 360.8 L99.40 328 L99.90 326 L99.95 299 L102.20 293 L102.50 325 L103.10 327 L103.10 360.8 L110.70 360.8 L111.30 359.6 L111.90 360.8 L111.90 328 L112.40 326 L112.45 299 L114.40 293 L114.70 325 L115.30 327 L115.30 360.8 L122.55 360.8 L123.15 359.6 L123.75 360.8 L123.75 328 L124.25 326 L124.30 299 L126.20 293 L126.50 325 L127.10 327 L127.10 360.8 L134.70 360.8 L135.30 359.6 L135.90 360.8 L135.90 328 L136.40 326 L136.45 297 L138.40 291 L138.70 325 L139.30 327 L139.30 360.8 L145.00 360.8 L145.60 359.6 L146.20 360.8 L146.20 328 L146.70 326 L146.75 296.6 L148.85 290.6 L149.15 325 L149.75 327 L149.75 360.8 L176.30 360.8 L176.90 359.6 L177.50 360.8 L177.50 328 L178.00 326 L178.05 304 L180.00 298 L180.30 325 L180.90 327 L180.90 360.8 L189.40 360.8 L190.00 359.6 L190.60 360.8 L190.60 328 L191.10 326 L191.15 304 L193.50 298 L193.80 325 L194.40 327 L194.40 360.8 L202.55 360.8 L203.15 359.6 L203.75 360.8 L203.75 328 L204.25 326 L204.30 301 L206.60 295 L206.90 325 L207.50 327 L207.50 360.8 L215.30 360.8 L215.90 359.6 L216.50 360.8 L216.50 328 L217.00 326 L217.05 301 L219.35 295 L219.65 325 L220.25 327 L220.25 360.8 L238.80 360.8 L239.40 359.6 L240.00 360.8 L240.00 328 L240.50 326 L240.55 304 L242.80 298 L243.10 325 L243.70 327 L243.70 360.8 L251.20 360.8 L251.80 359.6 L252.40 360.8 L252.40 328 L252.90 326 L252.95 304 L255.20 298 L255.50 325 L256.10 327 L256.10 360.8 L274.70 360.8 L275.30 359.6 L275.90 360.8 L275.90 328 L276.40 326 L276.45 304 L278.70 298 L279.00 325 L279.60 327 L279.60 360.8 L287.20 360.8 L287.80 359.6 L288.40 360.8 L288.40 328 L288.90 326 L288.95 304 L291.30 298 L291.60 325 L292.20 327 L292.20 360.8 L327.20 360.8 L327.80 359.6 L328.40 360.8 L328.40 328 L328.90 326 L328.95 304 L331.20 298 L331.50 325 L332.10 327 L332.10 360.8 L341.60 360.8 L342.20 359.6 L342.80 360.8 L342.80 328 L343.30 326 L343.35 301 L345.70 295 L346.00 325 L346.60 327 L346.60 360.8 L354.80 360.8 L355.40 359.6 L356.00 360.8 L356.00 328 L356.50 326 L356.55 301 L358.80 295 L359.10 325 L359.70 327 L359.70 360.8 L367.60 360.8 L368.20 359.6 L368.80 360.8 L368.80 328 L369.30 326 L369.35 304 L371.70 298 L372.00 325 L372.60 327 L372.60 360.8 L380.00 360.8 L380.60 359.6 L381.20 360.8 L381.20 328 L381.70 326 L381.75 301 L384.10 295 L384.40 325 L385.00 327 L385.00 360.8 L385.10 367.5 L385.40 360.8 L403.20 360.8 L403.80 359.6 L404.40 360.8 L404.40 328 L404.90 326 L404.95 306 L407.30 300 L407.60 325 L408.20 327 L408.20 360.8 L416.00 360.8 L416.60 359.6 L417.20 360.8 L417.20 328 L417.70 326 L417.75 304 L420.10 298 L420.40 325 L421.00 327 L421.00 360.8 L428.55 360.8 L429.15 359.6 L429.75 360.8 L429.75 328 L430.25 326 L430.30 304 L432.60 298 L432.90 325 L433.50 327 L433.50 360.8 L452 360.8 L452.6 359.8 L453.2 360.8 L469 360.8 L470 359.8 L471.6 360.8" fill="none" stroke="#dede1c" stroke-width="1.05" stroke-linejoin="miter" opacity="0.93"/><path d="M158.20 360.8V298 M162.30 360.8V302 M234.30 360.8V302 M271.90 360.8V302" fill="none" stroke="#dede1c" stroke-width="0.8" opacity="0.8"/><path d="M158.20 360.8V329 M163.40 360.8V329 M234.30 360.8V329 M271.90 360.8V329" fill="none" stroke="#dede1c" stroke-width="1.4" opacity="0.95"/><path d="M184.4 360.8l.6-1.3.6 1.3M212.6 360.8l.6-1.3.6 1.3M236 360.8l.6-1.6.6 1.6M256.8 360.8l.6-2 .6 2M260.6 360.8l.6-1.4.6 1.4M306.8 360.8l.7-2 .7 2M392 360.8l.6-1.3.6 1.3M397.5 360.8l.6-1.5.6 1.5M401.5 360.8l.6-1.3.6 1.3M412.6 360.8l.6-1.5.6 1.5" fill="none" stroke="#dede1c" stroke-width="0.8"/><path d="M34.90 360.8H43.10 M46.50 360.8H58.50 M61.90 360.8H73.10 M76.90 360.8H86.25 M90.00 360.8H99.40 M103.10 360.8H111.90 M115.30 360.8H123.75 M127.10 360.8H135.90 M139.30 360.8H146.20 M149.75 360.8H177.50 M180.90 360.8H190.60 M194.40 360.8H203.75 M207.50 360.8H216.50 M220.25 360.8H240.00 M243.70 360.8H252.40 M256.10 360.8H275.90 M279.60 360.8H288.40 M292.20 360.8H328.40 M332.10 360.8H342.80 M346.60 360.8H356.00 M359.70 360.8H368.80 M372.60 360.8H381.20 M385.00 360.8H404.40 M408.20 360.8H417.20 M421.00 360.8H429.75 M433.50 360.8H471.6" fill="none" stroke="#eaea10" stroke-width="1.5"/><path d="M14 279.5h16.2l5 5.35-5 5.35h-16.2z" fill="#0cecf0"/><path d="M14 356.8h16.2l5 5.35-5 5.35h-16.2z" fill="#f4f400"/><path d="M474.6 156.9l2.6-4h8.6v8h-8.6z" fill="#0cecf0"/><path d="M476.6 156.9h7M483.9 154.6v4.6" stroke="#2a9a9a" stroke-width="1" fill="none"/><path d="M251.5 86.4h8.2v7.2l-4.1 3.1-4.1-3.1z" fill="#f6f600"/><path d="M250.1 122h8.2v6.4l-4.1 2.9-4.1-2.9z" fill="#f6f600"/><path d="M437.8 74.9h5.9M437.8 82.3h5.9M440.75 74.9v7.4M438.5 77.3l2.25 1.5 2.25-1.5M438.5 79.2l2.25 1.5 2.25-1.5" fill="none" stroke="#12e8ec" stroke-width="1.25"/><rect x="8.2" y="397.5" width="75.1" height="34.10000000000002" fill="#2c3032" stroke="#1d8578" stroke-width="0.9"/><rect x="86.5" y="397.5" width="75.1" height="34.10000000000002" fill="#2c3032" stroke="#1d8578" stroke-width="0.9"/><rect x="424.8" y="397.5" width="75.19999999999999" height="34.10000000000002" fill="#2c3032" stroke="#1d8578" stroke-width="0.9"/><rect x="8.2" y="437.5" width="491.8" height="24.69999999999999" fill="#2c3032" stroke="#1d8578" stroke-width="0.9"/></svg>
<div class="t" style="left:9.30px;top:73.45px;font-size:9.4px;color:#f6f600;font-family:'Liberation Serif',serif;transform:scaleX(0.907);transform-origin:0 0;-webkit-text-stroke:0.35px #f6f600;">Stop</div>
<div class="t" style="left:252.70px;top:86.46px;font-size:8px;color:#1a1a00;font-family:'Liberation Sans',sans-serif;transform:scaleX(1.000);transform-origin:0 0;">T</div>
<div class="t" style="left:251.30px;top:121.86px;font-size:8px;color:#1a1a00;font-family:'Liberation Sans',sans-serif;transform:scaleX(1.000);transform-origin:0 0;">T</div>
<div class="t" style="left:414.80px;top:73.22px;font-size:9.8px;color:#1ce0e4;font-family:'Liberation Serif',serif;transform:scaleX(0.852);transform-origin:0 0;-webkit-text-stroke:0.1px #1ce0e4;">Auto</div>
<div class="t" style="left:447.30px;top:73.22px;font-size:9.8px;color:#1ce0e4;font-family:'Liberation Serif',serif;transform:scaleX(0.832);transform-origin:0 0;-webkit-text-stroke:0.1px #1ce0e4;">CH2</div>
<div class="t" style="left:466.70px;top:73.22px;font-size:9.8px;color:#1ce0e4;font-family:'Liberation Serif',serif;transform:scaleX(0.876);transform-origin:0 0;-webkit-text-stroke:0.1px #1ce0e4;">10.000 V</div>
<div class="t" style="left:15.10px;top:281.44px;font-size:7px;color:#1a7c7c;font-family:'Liberation Sans',sans-serif;transform:scaleX(0.885);transform-origin:0 0;">CH2</div>
<div class="t" style="left:15.10px;top:358.74px;font-size:7px;color:#7c7c10;font-family:'Liberation Sans',sans-serif;transform:scaleX(0.885);transform-origin:0 0;">CH1</div>
<div class="t" style="left:9.90px;top:399.00px;font-size:10px;color:#eeee00;font-family:'Liberation Serif',serif;transform:scaleX(0.804);transform-origin:0 0;-webkit-text-stroke:0.1px #eeee00;">CH1</div>
<div class="t" style="left:48.30px;top:399.00px;font-size:10px;color:#eeee00;font-family:'Liberation Serif',serif;transform:scaleX(0.801);transform-origin:0 0;-webkit-text-stroke:0.1px #eeee00;">X10</div>
<div class="t" style="left:68.20px;top:399.00px;font-size:10px;color:#eeee00;font-family:'Liberation Serif',serif;transform:scaleX(0.849);transform-origin:0 0;-webkit-text-stroke:0.1px #eeee00;">DC</div>
<div class="t" style="left:54.80px;top:409.30px;font-size:10px;color:#eeee00;font-family:'Liberation Serif',serif;transform:scaleX(0.837);transform-origin:0 0;-webkit-text-stroke:0.1px #eeee00;">5 V/div</div>
<div class="t" style="left:48.70px;top:419.70px;font-size:10px;color:#eeee00;font-family:'Liberation Serif',serif;transform:scaleX(0.885);transform-origin:0 0;-webkit-text-stroke:0.1px #eeee00;">-19.88 V</div>
<div class="t" style="left:88.30px;top:399.00px;font-size:10px;color:#1cdde2;font-family:'Liberation Serif',serif;transform:scaleX(0.804);transform-origin:0 0;-webkit-text-stroke:0.1px #1cdde2;">CH2</div>
<div class="t" style="left:126.70px;top:399.00px;font-size:10px;color:#1cdde2;font-family:'Liberation Serif',serif;transform:scaleX(0.801);transform-origin:0 0;-webkit-text-stroke:0.1px #1cdde2;">X10</div>
<div class="t" style="left:146.60px;top:399.00px;font-size:10px;color:#1cdde2;font-family:'Liberation Serif',serif;transform:scaleX(0.849);transform-origin:0 0;-webkit-text-stroke:0.1px #1cdde2;">DC</div>
<div class="t" style="left:133.20px;top:409.30px;font-size:10px;color:#1cdde2;font-family:'Liberation Serif',serif;transform:scaleX(0.837);transform-origin:0 0;-webkit-text-stroke:0.1px #1cdde2;">2 V/div</div>
<div class="t" style="left:131.50px;top:419.70px;font-size:10px;color:#1cdde2;font-family:'Liberation Serif',serif;transform:scaleX(0.886);transform-origin:0 0;-webkit-text-stroke:0.1px #1cdde2;">-1.95 V</div>
<div class="t" style="left:427.10px;top:399.00px;font-size:10px;color:#eeee00;font-family:'Liberation Serif',serif;transform:scaleX(0.862);transform-origin:0 0;-webkit-text-stroke:0.1px #eeee00;">Time</div>
<div class="t" style="left:466.50px;top:409.30px;font-size:10px;color:#eeee00;font-family:'Liberation Serif',serif;transform:scaleX(0.872);transform-origin:0 0;-webkit-text-stroke:0.1px #eeee00;">1 ms/div</div>
<div class="t" style="left:427.10px;top:419.70px;font-size:10px;color:#eeee00;font-family:'Liberation Serif',serif;transform:scaleX(0.795);transform-origin:0 0;-webkit-text-stroke:0.1px #eeee00;">12KB</div>
<div class="t" style="left:460.90px;top:419.70px;font-size:10px;color:#eeee00;font-family:'Liberation Serif',serif;transform:scaleX(0.867);transform-origin:0 0;-webkit-text-stroke:0.1px #eeee00;">100 KSa/s</div>
<div class="t" style="left:9.90px;top:439.70px;font-size:10px;color:#eeee00;font-family:'Liberation Serif',serif;transform:scaleX(0.881);transform-origin:0 0;-webkit-text-stroke:0.1px #eeee00;">Vmin= 121.091 mV</div>
<div class="t" style="left:9.90px;top:449.50px;font-size:10px;color:#1cdde2;font-family:'Liberation Serif',serif;transform:scaleX(0.867);transform-origin:0 0;-webkit-text-stroke:0.1px #1cdde2;">Vmin= 9.818 V</div>
<div class="t" style="left:100.30px;top:439.70px;font-size:10px;color:#eeee00;font-family:'Liberation Serif',serif;transform:scaleX(0.875);transform-origin:0 0;-webkit-text-stroke:0.1px #eeee00;">Vmax= 12.847 V</div>
<div class="t" style="left:100.30px;top:449.50px;font-size:10px;color:#1cdde2;font-family:'Liberation Serif',serif;transform:scaleX(0.884);transform-origin:0 0;-webkit-text-stroke:0.1px #1cdde2;">Vmax= 11.311 V</div>
<div class="t" style="left:190.50px;top:439.70px;font-size:10px;color:#eeee00;font-family:'Liberation Serif',serif;transform:scaleX(0.877);transform-origin:0 0;-webkit-text-stroke:0.1px #eeee00;">Vpp= 12.726 V</div>
<div class="t" style="left:190.50px;top:449.50px;font-size:10px;color:#1cdde2;font-family:'Liberation Serif',serif;transform:scaleX(0.883);transform-origin:0 0;-webkit-text-stroke:0.1px #1cdde2;">Vpp= 1.493 V</div>
<div class="t" style="left:281.20px;top:439.70px;font-size:10px;color:#eeee00;font-family:'Liberation Serif',serif;transform:scaleX(0.882);transform-origin:0 0;-webkit-text-stroke:0.1px #eeee00;">F= 2.273 KHz</div>
<div class="t" style="left:281.20px;top:449.50px;font-size:10px;color:#1cdde2;font-family:'Liberation Serif',serif;transform:scaleX(0.883);transform-origin:0 0;-webkit-text-stroke:0.1px #1cdde2;">F= 478.469 Hz</div>
<svg width="640" height="480" viewBox="0 0 640 480"><defs><linearGradient id="kn" x1="0.15" y1="0.1" x2="0.85" y2="0.9"><stop offset="0" stop-color="#fcfcfc"/><stop offset="0.5" stop-color="#dfdfdf"/><stop offset="1" stop-color="#b4b4b4"/></linearGradient><radialGradient id="led" cx="0.4" cy="0.35" r="0.7"><stop offset="0" stop-color="#70ff70"/><stop offset="0.35" stop-color="#14f214"/><stop offset="1" stop-color="#0fdc0f"/></radialGradient><radialGradient id="dot" cx="0.45" cy="0.4" r="0.6"><stop offset="0" stop-color="#5f8838"/><stop offset="1" stop-color="#3f6620"/></radialGradient></defs><rect x="507.8" y="70.5" width="129.8" height="22.099999999999994" fill="#f1f1f1" stroke="#e2e2e2" stroke-width="0.8"/><rect x="507.8" y="95.8" width="129.8" height="51.000000000000014" fill="#f1f1f1" stroke="#e2e2e2" stroke-width="0.8"/><rect x="507.8" y="149.6" width="129.8" height="50.80000000000001" fill="#f1f1f1" stroke="#e2e2e2" stroke-width="0.8"/><rect x="507.8" y="203.2" width="129.8" height="54.60000000000002" fill="#f1f1f1" stroke="#e2e2e2" stroke-width="0.8"/><rect x="507.8" y="260.8" width="129.8" height="167.59999999999997" fill="#f1f1f1" stroke="#e2e2e2" stroke-width="0.8"/><rect x="521.6" y="76.7" width="35.8" height="12.6" rx="2" fill="#fdfdfd" stroke="#c4c4c4" stroke-width="0.8"/><rect x="589" y="76.9" width="33.2" height="12.2" rx="1.8" fill="#dbe7f3" stroke="#4f8fd0" stroke-width="1.3"/><rect x="509.8" y="98.5" width="31.2" height="12.1" rx="2" fill="#f7f7f7" stroke="#ececec" stroke-width="0.6"/><circle cx="517.8" cy="104.75" r="4.25" fill="url(#led)" stroke="#2c2230" stroke-width="1.0"/><path d="M515.6 103.9q0.8-1.8 2.6-2" fill="none" stroke="#d8ffd8" stroke-width="0.7"/><rect x="509" y="114.9" width="32.7" height="12.6" fill="#b7b9bb" stroke="#3b7ec2" stroke-width="1.15"/><path d="M533.9 120.2l2.5 2.4 2.5-2.4" fill="none" stroke="#444" stroke-width="0.7"/><rect x="510" y="133.2" width="30.8" height="11.7" rx="2" fill="#fdfdfd" stroke="#d6d6d6" stroke-width="0.8"/><path d="M531.9 138.2h5.6l-2.8 3z" fill="#3b6fd0"/><rect x="509.8" y="151.7" width="31.2" height="12.1" rx="2" fill="#f7f7f7" stroke="#ececec" stroke-width="0.6"/><circle cx="517.8" cy="157.95" r="4.25" fill="url(#led)" stroke="#2c2230" stroke-width="1.0"/><path d="M515.6 157.10000000000002q0.8-1.8 2.6-2" fill="none" stroke="#d8ffd8" stroke-width="0.7"/><rect x="509" y="168.10000000000002" width="32.7" height="12.6" fill="#b7b9bb" stroke="#3b7ec2" stroke-width="1.15"/><path d="M533.9 173.4l2.5 2.4 2.5-2.4" fill="none" stroke="#444" stroke-width="0.7"/><rect x="510" y="186.39999999999998" width="30.8" height="11.7" rx="2" fill="#fdfdfd" stroke="#d6d6d6" stroke-width="0.8"/><path d="M531.9 191.39999999999998h5.6l-2.8 3z" fill="#3b6fd0"/><circle cx="598.1" cy="125" r="12.5" fill="url(#kn)"/><line x1="588.77" y1="115.67" x2="585.37" y2="112.27" stroke="#222" stroke-width="1.0"/><line x1="607.43" y1="115.67" x2="610.83" y2="112.27" stroke="#222" stroke-width="1.0"/><line x1="588.77" y1="134.33" x2="585.37" y2="137.73" stroke="#222" stroke-width="1.0"/><line x1="607.43" y1="134.33" x2="610.83" y2="137.73" stroke="#222" stroke-width="1.0"/><line x1="594.35" y1="110.99" x2="593.83" y2="109.06" stroke="#222" stroke-width="0.9"/><line x1="601.85" y1="110.99" x2="602.37" y2="109.06" stroke="#222" stroke-width="0.9"/><line x1="584.58" y1="121.38" x2="582.65" y2="120.86" stroke="#222" stroke-width="0.9"/><line x1="584.58" y1="128.62" x2="582.65" y2="129.14" stroke="#222" stroke-width="0.9"/><line x1="611.62" y1="121.38" x2="613.55" y2="120.86" stroke="#222" stroke-width="0.9"/><line x1="611.62" y1="128.62" x2="613.55" y2="129.14" stroke="#222" stroke-width="0.9"/><circle cx="600.54" cy="117.49" r="2.9" fill="url(#dot)"/><circle cx="598.2" cy="180" r="12.5" fill="url(#kn)"/><line x1="588.87" y1="170.67" x2="585.47" y2="167.27" stroke="#222" stroke-width="1.0"/><line x1="607.53" y1="170.67" x2="610.93" y2="167.27" stroke="#222" stroke-width="1.0"/><line x1="588.87" y1="189.33" x2="585.47" y2="192.73" stroke="#222" stroke-width="1.0"/><line x1="607.53" y1="189.33" x2="610.93" y2="192.73" stroke="#222" stroke-width="1.0"/><line x1="594.45" y1="165.99" x2="593.93" y2="164.06" stroke="#222" stroke-width="0.9"/><line x1="601.95" y1="165.99" x2="602.47" y2="164.06" stroke="#222" stroke-width="0.9"/><line x1="584.68" y1="176.38" x2="582.75" y2="175.86" stroke="#222" stroke-width="0.9"/><line x1="584.68" y1="183.62" x2="582.75" y2="184.14" stroke="#222" stroke-width="0.9"/><line x1="611.72" y1="176.38" x2="613.65" y2="175.86" stroke="#222" stroke-width="0.9"/><line x1="611.72" y1="183.62" x2="613.65" y2="184.14" stroke="#222" stroke-width="0.9"/><circle cx="596.16" cy="172.37" r="2.9" fill="url(#dot)"/><rect x="510" y="242.8" width="30.8" height="11.7" rx="2" fill="#fdfdfd" stroke="#d6d6d6" stroke-width="0.8"/><path d="M531.9 247.8h5.6l-2.8 3z" fill="#3b6fd0"/><circle cx="593.5" cy="234.3" r="13.6" fill="url(#kn)"/><line x1="583.46" y1="244.34" x2="580.91" y2="246.89" stroke="#222" stroke-width="0.85"/><line x1="581.87" y1="242.44" x2="580.23" y2="243.59" stroke="#222" stroke-width="0.85"/><line x1="580.63" y1="240.30" x2="578.82" y2="241.15" stroke="#222" stroke-width="0.85"/><line x1="579.78" y1="237.98" x2="576.31" y2="238.91" stroke="#222" stroke-width="0.85"/><line x1="579.35" y1="235.54" x2="577.36" y2="235.71" stroke="#222" stroke-width="0.85"/><line x1="579.35" y1="233.06" x2="577.36" y2="232.89" stroke="#222" stroke-width="0.85"/><line x1="579.78" y1="230.62" x2="576.31" y2="229.69" stroke="#222" stroke-width="0.85"/><line x1="580.63" y1="228.30" x2="578.82" y2="227.45" stroke="#222" stroke-width="0.85"/><line x1="581.87" y1="226.16" x2="580.23" y2="225.01" stroke="#222" stroke-width="0.85"/><line x1="583.46" y1="224.26" x2="580.91" y2="221.71" stroke="#222" stroke-width="0.85"/><line x1="585.36" y1="222.67" x2="584.21" y2="221.03" stroke="#222" stroke-width="0.85"/><line x1="587.50" y1="221.43" x2="586.65" y2="219.62" stroke="#222" stroke-width="0.85"/><line x1="589.82" y1="220.58" x2="588.89" y2="217.11" stroke="#222" stroke-width="0.85"/><line x1="592.26" y1="220.15" x2="592.09" y2="218.16" stroke="#222" stroke-width="0.85"/><line x1="594.74" y1="220.15" x2="594.91" y2="218.16" stroke="#222" stroke-width="0.85"/><line x1="597.18" y1="220.58" x2="598.11" y2="217.11" stroke="#222" stroke-width="0.85"/><line x1="599.50" y1="221.43" x2="600.35" y2="219.62" stroke="#222" stroke-width="0.85"/><line x1="601.64" y1="222.67" x2="602.79" y2="221.03" stroke="#222" stroke-width="0.85"/><line x1="603.54" y1="224.26" x2="606.09" y2="221.71" stroke="#222" stroke-width="0.85"/><line x1="605.13" y1="226.16" x2="606.77" y2="225.01" stroke="#222" stroke-width="0.85"/><line x1="606.37" y1="228.30" x2="608.18" y2="227.45" stroke="#222" stroke-width="0.85"/><line x1="607.22" y1="230.62" x2="610.69" y2="229.69" stroke="#222" stroke-width="0.85"/><line x1="607.65" y1="233.06" x2="609.64" y2="232.89" stroke="#222" stroke-width="0.85"/><line x1="607.65" y1="235.54" x2="609.64" y2="235.71" stroke="#222" stroke-width="0.85"/><line x1="607.22" y1="237.98" x2="610.69" y2="238.91" stroke="#222" stroke-width="0.85"/><line x1="606.37" y1="240.30" x2="608.18" y2="241.15" stroke="#222" stroke-width="0.85"/><line x1="605.13" y1="242.44" x2="606.77" y2="243.59" stroke="#222" stroke-width="0.85"/><line x1="603.54" y1="244.34" x2="606.09" y2="246.89" stroke="#222" stroke-width="0.85"/><circle cx="596.58" cy="225.84" r="2.9" fill="url(#dot)"/><rect x="556" y="264.9" width="77.7" height="12.400000000000034" fill="#b7b9bb" stroke="#3b7ec2" stroke-width="1.15"/><path d="M625.8 270.1l2.5 2.4 2.5-2.4" fill="none" stroke="#444" stroke-width="0.7"/><rect x="556" y="279.5" width="77.7" height="12.5" fill="#b7b9bb" stroke="#3b7ec2" stroke-width="1.15"/><path d="M625.8 284.75l2.5 2.4 2.5-2.4" fill="none" stroke="#444" stroke-width="0.7"/><rect x="556" y="294.4" width="77.7" height="12.5" fill="#b7b9bb" stroke="#3b7ec2" stroke-width="1.15"/><path d="M625.8 299.65l2.5 2.4 2.5-2.4" fill="none" stroke="#444" stroke-width="0.7"/><rect x="552.7" y="315.7" width="52.8" height="11.3" rx="1" fill="#fff" stroke="#a9c8ec" stroke-width="0.9"/><rect x="606.9" y="315.7" width="26.4" height="11.3" fill="#f6f6f6" stroke="#e4e4e4" stroke-width="0.6"/><path d="M625.8 320.6l2.5 2.4 2.5-2.4" fill="none" stroke="#444" stroke-width="0.7"/><rect x="602.6" y="336.2" width="18" height="12.5" fill="#fff" stroke="#111" stroke-width="0.9"/><rect x="610.2" y="350.9" width="14.5" height="12" fill="#fff" stroke="#111" stroke-width="0.9"/><rect x="550.2" y="366.3" width="44.8" height="11.5" rx="1.5" fill="#f0f0f0" stroke="#dcdcdc" stroke-width="0.8"/><path d="M430.5 469v10M630.5 469v10" stroke="#9fbce6" stroke-width="0.8"/><path d="M431.3 469v10M631.3 469v10" stroke="#f2f7fd" stroke-width="0.8"/><g fill="#6f8fc4"><rect x="637" y="471.5" width="1.2" height="1.2"/><rect x="634.8" y="473.8" width="1.2" height="1.2"/><rect x="637" y="473.8" width="1.2" height="1.2"/><rect x="632.6" y="476" width="1.2" height="1.2"/><rect x="634.8" y="476" width="1.2" height="1.2"/><rect x="637" y="476" width="1.2" height="1.2"/></g></svg>
<div class="t" style="left:531.30px;top:79.01px;font-size:7.4px;color:#000;font-family:'Liberation Sans',sans-serif;transform:scaleX(1.025);transform-origin:0 0;-webkit-text-stroke:0.15px #000;">Auto</div>
<div class="t" style="left:598.70px;top:79.01px;font-size:7.4px;color:#000;font-family:'Liberation Sans',sans-serif;transform:scaleX(0.929);transform-origin:0 0;-webkit-text-stroke:0.15px #000;">Run</div>
<div class="t" style="left:523.70px;top:100.33px;font-size:8.4px;color:#000;font-family:'Liberation Sans',sans-serif;transform:scaleX(0.799);transform-origin:0 0;">CH1</div>
<div class="t" style="left:510.50px;top:117.61px;font-size:7.4px;color:#000;font-family:'Liberation Sans',sans-serif;transform:scaleX(0.851);transform-origin:0 0;-webkit-text-stroke:0.15px #000;">X10</div>
<div class="t" style="left:511.10px;top:135.31px;font-size:7.4px;color:#000;font-family:'Liberation Sans',sans-serif;transform:scaleX(0.867);transform-origin:0 0;-webkit-text-stroke:0.15px #000;">More</div>
<div class="t" style="left:523.70px;top:153.53px;font-size:8.4px;color:#000;font-family:'Liberation Sans',sans-serif;transform:scaleX(0.799);transform-origin:0 0;">CH2</div>
<div class="t" style="left:510.50px;top:170.81px;font-size:7.4px;color:#000;font-family:'Liberation Sans',sans-serif;transform:scaleX(0.851);transform-origin:0 0;-webkit-text-stroke:0.15px #000;">X10</div>
<div class="t" style="left:511.10px;top:188.51px;font-size:7.4px;color:#000;font-family:'Liberation Sans',sans-serif;transform:scaleX(0.867);transform-origin:0 0;-webkit-text-stroke:0.15px #000;">More</div>
<div class="t" style="left:511.10px;top:244.91px;font-size:7.4px;color:#000;font-family:'Liberation Sans',sans-serif;transform:scaleX(0.867);transform-origin:0 0;-webkit-text-stroke:0.15px #000;">More</div>
<div class="t" style="left:573.90px;top:108.46px;font-size:8px;color:#000;font-family:'Liberation Serif',serif;transform:scaleX(0.879);transform-origin:0 0;-webkit-text-stroke:0.1px #000;">1V</div>
<div class="t" style="left:612.30px;top:108.46px;font-size:8px;color:#000;font-family:'Liberation Serif',serif;transform:scaleX(0.900);transform-origin:0 0;-webkit-text-stroke:0.1px #000;">10V</div>
<div class="t" style="left:560.10px;top:132.66px;font-size:8px;color:#000;font-family:'Liberation Serif',serif;transform:scaleX(0.917);transform-origin:0 0;-webkit-text-stroke:0.1px #000;">100mV</div>
<div class="t" style="left:612.30px;top:132.66px;font-size:8px;color:#000;font-family:'Liberation Serif',serif;transform:scaleX(0.900);transform-origin:0 0;-webkit-text-stroke:0.1px #000;">100V</div>
<div class="t" style="left:573.90px;top:163.36px;font-size:8px;color:#000;font-family:'Liberation Serif',serif;transform:scaleX(0.879);transform-origin:0 0;-webkit-text-stroke:0.1px #000;">1V</div>
<div class="t" style="left:612.30px;top:163.36px;font-size:8px;color:#000;font-family:'Liberation Serif',serif;transform:scaleX(0.900);transform-origin:0 0;-webkit-text-stroke:0.1px #000;">10V</div>
<div class="t" style="left:560.10px;top:187.56px;font-size:8px;color:#000;font-family:'Liberation Serif',serif;transform:scaleX(0.917);transform-origin:0 0;-webkit-text-stroke:0.1px #000;">100mV</div>
<div class="t" style="left:612.30px;top:187.56px;font-size:8px;color:#000;font-family:'Liberation Serif',serif;transform:scaleX(0.900);transform-origin:0 0;-webkit-text-stroke:0.1px #000;">100V</div>
<div class="t" style="left:574.50px;top:208.26px;font-size:8px;color:#000;font-family:'Liberation Serif',serif;transform:scaleX(1.077);transform-origin:0 0;-webkit-text-stroke:0.1px #000;">100us</div>
<div class="t" style="left:599.00px;top:208.26px;font-size:8px;color:#000;font-family:'Liberation Serif',serif;transform:scaleX(1.034);transform-origin:0 0;-webkit-text-stroke:0.1px #000;">1ms</div>
<div class="t" style="left:561.80px;top:215.06px;font-size:8px;color:#000;font-family:'Liberation Serif',serif;transform:scaleX(0.985);transform-origin:0 0;-webkit-text-stroke:0.1px #000;">10us</div>
<div class="t" style="left:608.20px;top:215.86px;font-size:8px;color:#000;font-family:'Liberation Serif',serif;transform:scaleX(1.049);transform-origin:0 0;-webkit-text-stroke:0.1px #000;">10ms</div>
<div class="t" style="left:561.80px;top:224.06px;font-size:8px;color:#000;font-family:'Liberation Serif',serif;transform:scaleX(0.989);transform-origin:0 0;-webkit-text-stroke:0.1px #000;">1us</div>
<div class="t" style="left:612.80px;top:225.06px;font-size:8px;color:#000;font-family:'Liberation Serif',serif;transform:scaleX(1.045);transform-origin:0 0;-webkit-text-stroke:0.1px #000;">100ms</div>
<div class="t" style="left:552.70px;top:232.96px;font-size:8px;color:#000;font-family:'Liberation Serif',serif;transform:scaleX(1.051);transform-origin:0 0;-webkit-text-stroke:0.1px #000;">100ns</div>
<div class="t" style="left:612.80px;top:234.56px;font-size:8px;color:#000;font-family:'Liberation Serif',serif;transform:scaleX(0.926);transform-origin:0 0;-webkit-text-stroke:0.1px #000;">1s</div>
<div class="t" style="left:561.80px;top:242.16px;font-size:8px;color:#000;font-family:'Liberation Serif',serif;transform:scaleX(0.985);transform-origin:0 0;-webkit-text-stroke:0.1px #000;">10ns</div>
<div class="t" style="left:608.20px;top:243.26px;font-size:8px;color:#000;font-family:'Liberation Serif',serif;transform:scaleX(1.043);transform-origin:0 0;-webkit-text-stroke:0.1px #000;">10s</div>
<div class="t" style="left:510.00px;top:267.51px;font-size:7.4px;color:#000;font-family:'Liberation Sans',sans-serif;transform:scaleX(0.897);transform-origin:0 0;-webkit-text-stroke:0.15px #000;">Trigger Mode</div>
<div class="t" style="left:510.00px;top:283.51px;font-size:7.4px;color:#000;font-family:'Liberation Sans',sans-serif;transform:scaleX(0.887);transform-origin:0 0;-webkit-text-stroke:0.15px #000;">Trigger Source</div>
<div class="t" style="left:510.00px;top:298.81px;font-size:7.4px;color:#000;font-family:'Liberation Sans',sans-serif;transform:scaleX(0.903);transform-origin:0 0;-webkit-text-stroke:0.15px #000;">Trigger Style</div>
<div class="t" style="left:510.00px;top:316.31px;font-size:7.4px;color:#000;font-family:'Liberation Sans',sans-serif;transform:scaleX(0.903);transform-origin:0 0;-webkit-text-stroke:0.15px #000;">Trigger Level</div>
<div class="t" style="left:557.50px;top:267.81px;font-size:7.4px;color:#000;font-family:'Liberation Sans',sans-serif;transform:scaleX(0.933);transform-origin:0 0;-webkit-text-stroke:0.15px #000;">Auto</div>
<div class="t" style="left:557.50px;top:282.81px;font-size:7.4px;color:#000;font-family:'Liberation Sans',sans-serif;transform:scaleX(0.838);transform-origin:0 0;-webkit-text-stroke:0.15px #000;">CH2</div>
<div class="t" style="left:557.50px;top:297.11px;font-size:7.4px;color:#000;font-family:'Liberation Sans',sans-serif;transform:scaleX(0.846);transform-origin:0 0;-webkit-text-stroke:0.15px #000;">Edge</div>
<div class="t" style="left:570.50px;top:317.81px;font-size:7.4px;color:#999;font-family:'Liberation Sans',sans-serif;transform:scaleX(0.817);transform-origin:0 0;">0 0</div>
<div class="t" style="left:579.30px;top:317.81px;font-size:7.4px;color:#000;font-family:'Liberation Sans',sans-serif;transform:scaleX(0.938);transform-origin:0 0;-webkit-text-stroke:0.15px #000;">10.000</div>
<div class="t" style="left:608.20px;top:317.61px;font-size:7.4px;color:#000;font-family:'Liberation Sans',sans-serif;transform:scaleX(1.013);transform-origin:0 0;-webkit-text-stroke:0.15px #000;">V</div>
<div class="t" style="left:510.00px;top:337.11px;font-size:7.4px;color:#000;font-family:'Liberation Sans',sans-serif;transform:scaleX(0.932);transform-origin:0 0;-webkit-text-stroke:0.15px #000;">Trigger Sensitivity(0-1.0)</div>
<div class="t" style="left:604.10px;top:338.71px;font-size:7.4px;color:#000;font-family:'Liberation Sans',sans-serif;transform:scaleX(1.002);transform-origin:0 0;-webkit-text-stroke:0.15px #000;">0.4</div>
<div class="t" style="left:622.50px;top:336.71px;font-size:7.4px;color:#000;font-family:'Liberation Sans',sans-serif;transform:scaleX(0.825);transform-origin:0 0;-webkit-text-stroke:0.15px #000;">div</div>
<div class="t" style="left:510.00px;top:351.11px;font-size:7.4px;color:#000;font-family:'Liberation Sans',sans-serif;transform:scaleX(0.927);transform-origin:0 0;-webkit-text-stroke:0.15px #000;">Trigger Front Percent(1-99)</div>
<div class="t" style="left:611.50px;top:353.21px;font-size:7.4px;color:#000;font-family:'Liberation Sans',sans-serif;transform:scaleX(0.874);transform-origin:0 0;-webkit-text-stroke:0.15px #000;">50</div>
<div class="t" style="left:626.80px;top:351.11px;font-size:7.4px;color:#000;font-family:'Liberation Sans',sans-serif;transform:scaleX(0.867);transform-origin:0 0;-webkit-text-stroke:0.15px #000;">%</div>
<div class="t" style="left:562.90px;top:368.21px;font-size:7.4px;color:#8a8a8a;font-family:'Liberation Sans',sans-serif;transform:scaleX(0.952);transform-origin:0 0;">Force</div></body></html>
